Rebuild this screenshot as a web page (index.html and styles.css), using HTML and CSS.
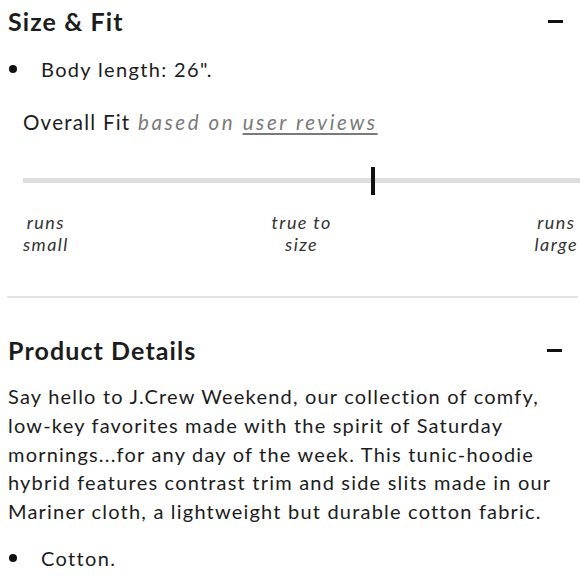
FILE: index.html
```html
<!DOCTYPE html>
<html>
<head>
<meta charset="utf-8">
<link rel="stylesheet" href="styles.css">
</head>
<body>
<section class="panel">
  <div class="panel-head">
    <h2 class="panel-title">Size &amp; Fit</h2>
    <span class="toggle"></span>
  </div>
  <ul class="bullets">
    <li>Body length: 26".</li>
  </ul>
  <div class="fit">
    <p class="fit-title">Overall Fit <span class="fit-note">based on <a class="fit-link">user reviews</a></span></p>
    <div class="track"><span class="marker"></span></div>
    <div class="scale">
      <span class="scale-label">runs<br>small</span>
      <span class="scale-label">true to<br>size</span>
      <span class="scale-label">runs<br>large</span>
    </div>
  </div>
</section>
<section class="panel panel-details">
  <div class="panel-head">
    <h2 class="panel-title">Product Details</h2>
    <span class="toggle"></span>
  </div>
  <p class="desc">Say hello to J.Crew Weekend, our collection of comfy, low-key favorites made with the spirit of Saturday mornings...for any day of the week. This tunic-hoodie hybrid features contrast trim and side slits made in our Mariner cloth, a lightweight but durable cotton fabric.</p>
  <ul class="bullets">
    <li>Cotton.</li>
  </ul>
</section>
</body>
</html>
```
FILE: styles.css
```css
html, body {
  margin: 0;
  padding: 0;
  background: #fff;
  overflow: hidden;
}
body {
  font-family: Lato, "Noto Sans", sans-serif;
  color: #1c1c1c;
  width: 580px;
}
.panel {
  padding: 0 8px;
}
.panel-head {
  display: flex;
  align-items: center;
  justify-content: space-between;
  height: 42px;
}
.panel-title {
  margin: 0;
  font-size: 25px;
  font-weight: 700;
  letter-spacing: 1.1px;
}
.toggle {
  width: 15px;
  height: 3px;
  background: #111;
  margin-right: 9px;
}
.bullets {
  margin: 0;
  padding: 0;
  list-style: none;
}
.bullets li {
  position: relative;
  padding-left: 33px;
  font-size: 20px;
  line-height: 28px;
  letter-spacing: 1.35px;
}
.bullets li::before {
  content: "";
  position: absolute;
  left: 1px;
  top: 10px;
  width: 8px;
  height: 8px;
  border-radius: 50%;
  background: #111;
}
.panel > .bullets {
  margin-top: 13px;
}
.fit {
  padding-left: 15px;
  margin-right: -8px;
  margin-top: 25px;
}
.fit-title {
  margin: 0;
  font-size: 20.5px;
  line-height: 28px;
  letter-spacing: 1.25px;
}
.fit-note {
  font-style: italic;
  color: #7a7a7a;
  letter-spacing: 2.6px;
  margin-left: 1px;
}
.fit-link {
  text-decoration: underline;
  text-underline-offset: 3px;
  color: #7a7a7a;
}
.track {
  position: relative;
  height: 5px;
  background: #dedede;
  margin-top: 42px;
}
.marker {
  position: absolute;
  left: 348px;
  top: -11px;
  width: 4px;
  height: 28px;
  background: #111;
}
.scale {
  display: flex;
  justify-content: space-between;
  margin-top: 28px;
  padding-right: 2px;
}
.scale-label {
  text-align: center;
  font-style: italic;
  font-size: 18px;
  line-height: 22px;
  color: #333;
  letter-spacing: 1.4px;
}
.panel-details {
  border-top: 2px solid #e3e3e3;
  margin: 41px 2px 0 7px;
  padding: 31px 7px 0 1px;
}
.desc {
  margin: 11px 0 0;
  font-size: 20px;
  line-height: 28.75px;
  letter-spacing: 1.2px;
}
.panel-details .bullets {
  margin-top: 18px;
}
```
